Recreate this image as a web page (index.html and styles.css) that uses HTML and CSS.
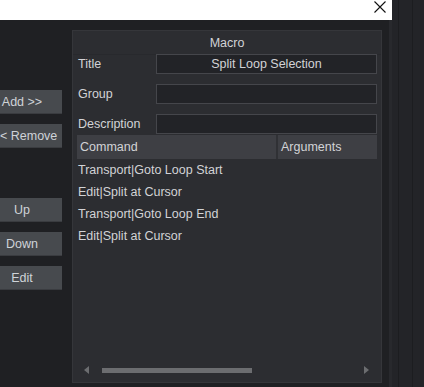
FILE: index.html
```html
<!DOCTYPE html>
<html lang="en">
<head>
    <meta charset="UTF-8">
    <title>Macro</title>
    <link rel="stylesheet" href="styles.css">
</head>
<body>
    <div class="app">
        <!-- Основная часть окна -->
        <div class="main">
            <div class="titlebar">
                <svg class="close" width="12" height="12" viewBox="0 0 12 12">
                    <path d="M0.5 0.5 L11.5 11.5 M11.5 0.5 L0.5 11.5" stroke="#111" stroke-width="1.1" fill="none"/>
                </svg>
            </div>

            <div class="content">
                <!-- Кнопки слева -->
                <div class="buttons">
                    <button class="btn">Add &gt;&gt;</button>
                    <button class="btn btn-remove">&lt; Remove</button>
                    <button class="btn gap-top">Up</button>
                    <button class="btn">Down</button>
                    <button class="btn">Edit</button>
                </div>

                <!-- Панель макроса -->
                <div class="panel">
                    <div class="panel-title">Macro</div>

                    <div class="field">
                        <span class="label">Title</span>
                        <div class="input centered">Split Loop Selection</div>
                    </div>
                    <div class="field">
                        <span class="label">Group</span>
                        <div class="input"></div>
                    </div>
                    <div class="field field-last">
                        <span class="label">Description</span>
                        <div class="input"></div>
                    </div>

                    <div class="table-head">
                        <div class="col-command">Command</div>
                        <div class="col-args">Arguments</div>
                    </div>
                    <div class="rows">
                        <div class="row">Transport|Goto Loop Start</div>
                        <div class="row">Edit|Split at Cursor</div>
                        <div class="row">Transport|Goto Loop End</div>
                        <div class="row">Edit|Split at Cursor</div>
                    </div>

                    <!-- Горизонтальная прокрутка -->
                    <div class="hscroll">
                        <span class="arrow left"></span>
                        <div class="track"><div class="thumb"></div></div>
                        <span class="arrow right"></span>
                    </div>
                </div>
            </div>
        </div>

        <!-- Правая тёмная часть -->
        <div class="side">
            <div class="side-line"></div>
            <div class="side-line"></div>
        </div>
    </div>
</body>
</html>
```

FILE: styles.css
```css
body {
    margin: 0;
    padding: 0;
    height: 100vh;
    overflow: hidden;
    background: #1f2023;
    font-family: 'Liberation Sans', Arial, sans-serif;
    font-size: 12.5px;
    color: #d2d3d6;
}

.app {
    display: flex;
    height: 387px;
}

/* Основная часть */
.main {
    width: 392px;
    display: flex;
    flex-direction: column;
}

.titlebar {
    height: 20px;
    background: #ffffff;
    display: flex;
    justify-content: flex-end;
    align-items: flex-start;
    padding-right: 6px;
}

.close {
    margin-top: 1px;
}

.content {
    flex: 1;
    display: flex;
    background: #1f2023;
    padding-top: 10px;
    border-right: 3px solid #28292d;
}

/* Кнопки слева */
.buttons {
    width: 72px;
    display: flex;
    flex-direction: column;
    padding-top: 60px;
}

.btn {
    width: 62px;
    height: 24px;
    margin-bottom: 10px;
    padding: 0 18px 0 0;
    background: #474a4e;
    border: none;
    border-bottom: 1px solid #3a3c40;
    color: #cfd3d8;
    font-family: inherit;
    font-size: 12.5px;
    text-align: center;
    white-space: nowrap;
}

.btn.btn-remove {
    padding: 0;
    text-align: left;
}

.btn.gap-top {
    margin-top: 40px;
}

/* Панель */
.panel {
    width: 308px;
    height: 351px;
    background: #2c2d31;
    border: 1px solid #35363a;
    display: flex;
    flex-direction: column;
}

.panel-title {
    height: 23px;
    line-height: 24px;
    text-align: center;
    border-bottom: 1px solid #28292d;
    margin-bottom: -1px;
}

.field {
    display: flex;
    align-items: center;
    height: 20px;
    margin-bottom: 10px;
}

.field.field-last {
    margin-bottom: 1px;
}

.label {
    width: 78px;
    padding-left: 5px;
}

.input {
    width: 219px;
    height: 18px;
    line-height: 18px;
    background: #222327;
    border: 1px solid #45464b;
}

.input.centered {
    text-align: center;
}

.table-head {
    display: flex;
    height: 24px;
    line-height: 24px;
    margin: 0 4px;
    background: #3e3f44;
}

.col-command {
    width: 196px;
    padding-left: 3px;
    border-right: 2px solid #303135;
}

.col-args {
    padding-left: 3px;
}

.rows {
    flex: 1;
    padding-left: 5px;
}

.row {
    height: 22px;
    line-height: 22px;
}

/* Прокрутка */
.hscroll {
    height: 24px;
    display: flex;
    align-items: center;
    padding: 0 12px 0 11px;
}

.track {
    flex: 1;
    margin: 0 12px 0 13px;
}

.thumb {
    width: 150px;
    height: 5px;
    background: #6c6d70;
}

.arrow {
    width: 0;
    height: 0;
    border-top: 4px solid transparent;
    border-bottom: 4px solid transparent;
}

.arrow.left {
    border-right: 5px solid #6c6d70;
}

.arrow.right {
    border-left: 5px solid #6c6d70;
}

/* Правая часть */
.side {
    flex: 1;
    background: #232428;
    display: flex;
    padding-left: 6px;
    gap: 13px;
}

.side-line {
    width: 1px;
    background: #1c1d20;
}
```
